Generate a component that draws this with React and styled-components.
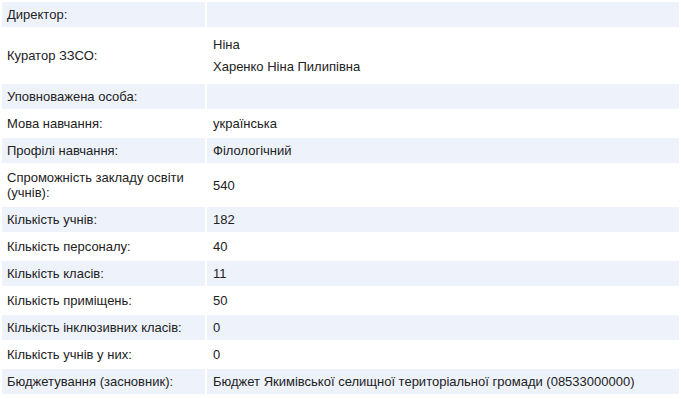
import React from 'react';
import styled, { createGlobalStyle } from 'styled-components';

const GlobalStyle = createGlobalStyle`
  body {
    margin: 0;
    background: #fff;
    font-family: "Liberation Sans", Arial, sans-serif;
  }
`;

const InfoTable = styled.table`
  width: 681px;
  border-collapse: separate;
  border-spacing: 2px;
  font-size: 13px;
  line-height: 15px;
  color: #222;
`;

const Row = styled.tr`
  background: ${(p) => (p.$shaded ? '#eef3fb' : '#fff')};
`;

const Label = styled.td`
  width: 193px;
  padding: 5px 5px;
  vertical-align: middle;
`;

const Value = styled.td`
  padding: 5px 6px;
  vertical-align: middle;
`;

const ValueLine = styled.div`
  line-height: 21.5px;
`;

const rows = [
  ['Директор:', ''],
  ['Куратор ЗЗСО:', ['Ніна', 'Харенко Ніна Пилипівна']],
  ['Уповноважена особа:', ''],
  ['Мова навчання:', 'українська'],
  ['Профілі навчання:', 'Філологічний'],
  ['Спроможність закладу освіти (учнів):', '540'],
  ['Кількість учнів:', '182'],
  ['Кількість персоналу:', '40'],
  ['Кількість класів:', '11'],
  ['Кількість приміщень:', '50'],
  ['Кількість інклюзивних класів:', '0'],
  ['Кількість учнів у них:', '0'],
  ['Бюджетування (засновник):', 'Бюджет Якимівської селищної територіальної громади (08533000000)'],
];

function App() {
  return (
    <>
      <GlobalStyle />
      <InfoTable>
        <tbody>
          {rows.map(([label, value], i) => (
            <Row key={label} $shaded={i % 2 === 0}>
              <Label>{label}</Label>
              <Value>
                {Array.isArray(value)
                  ? value.map((v) => <ValueLine key={v}>{v}</ValueLine>)
                  : value}
              </Value>
            </Row>
          ))}
        </tbody>
      </InfoTable>
    </>
  );
}

export default App;
